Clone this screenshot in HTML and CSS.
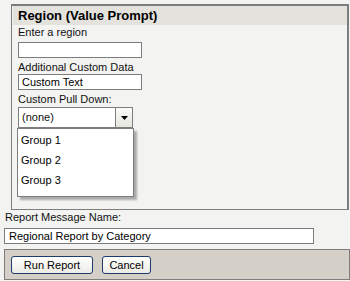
FILE: index.html
```html
<!DOCTYPE html>
<html lang="en">

<head>
    <meta charset="UTF-8">
    <meta name="viewport" content="width=device-width, initial-scale=1.0">
    <title>Region Prompt</title>
    <link rel="stylesheet" href="styles.css">
</head>

<body>
    <div class="prompt-panel">
        <div class="prompt-title">Region (Value Prompt)</div>

        <div class="prompt-body">
            <label class="field-label first">Enter a region</label>
            <input type="text" class="text-field region-field">

            <label class="field-label">Additional Custom Data</label>
            <input type="text" class="text-field custom-field" value="Custom Text">

            <label class="field-label">Custom Pull Down:</label>
            <div class="pulldown">
                <div class="pulldown-box">
                    <span class="pulldown-value">(none)</span>
                    <span class="pulldown-arrow">
                        <svg width="7" height="4" viewBox="0 0 7 4">
                            <polygon points="0,0 7,0 3.5,4" fill="#000" />
                        </svg>
                    </span>
                </div>
                <ul class="pulldown-list">
                    <li>Group 1</li>
                    <li>Group 2</li>
                    <li>Group 3</li>
                </ul>
            </div>
        </div>
    </div>

    <div class="message-row">
        <label class="message-label">Report Message Name:</label>
        <input type="text" class="text-field message-field" value="Regional Report by Category">
    </div>

    <div class="button-bar">
        <button class="bar-button run-button">Run Report</button>
        <button class="bar-button cancel-button">Cancel</button>
    </div>
</body>

</html>
```

FILE: styles.css
```css
* {
    margin: 0;
    padding: 0;
    box-sizing: border-box;
    font-family: 'Liberation Sans', Arial, sans-serif;
}

body {
    background: #f3f3f1;
    font-size: 11px;
    color: #111;
}

.prompt-panel {
    margin: 4px 1px 0 11px;
    border: 1px solid #7d7d7d;
    border-top-width: 2px;
    border-right-width: 2px;
    padding-left: 1px;
}

.prompt-title {
    background: #e3e2dd;
    height: 19px;
    line-height: 19px;
    padding-left: 5px;
    font-size: 13px;
    font-weight: bold;
    color: #000;
}

.prompt-body {
    padding: 0 0 81px 5px;
}

.field-label {
    display: block;
    line-height: 14px;
    margin-top: 2px;
}

.field-label.first {
    margin-top: 0;
}

.text-field {
    display: block;
    height: 16px;
    border: 1px solid #7d7d7d;
    background: white;
    font-size: 11px;
    padding: 0 3px;
    color: #000;
}

.region-field {
    width: 124px;
    margin-top: 3px;
}

.custom-field {
    width: 124px;
}

.pulldown {
    position: relative;
    margin-top: 1px;
    width: 115px;
}

.pulldown-box {
    display: flex;
    height: 21px;
    border: 1px solid #7d7d7d;
    background: white;
}

.pulldown-value {
    flex: 1;
    line-height: 19px;
    padding-left: 3px;
}

.pulldown-arrow {
    width: 17px;
    border-left: 1px solid #7d7d7d;
    background: linear-gradient(#fbfbf8, #e6e5df);
    display: flex;
    justify-content: center;
    align-items: center;
}

/* open list drawn over the panel */
.pulldown-list {
    position: absolute;
    top: 21px;
    left: -1px;
    width: 117px;
    height: 69px;
    list-style: none;
    background: white;
    border: 1px solid #7d7d7d;
    padding-top: 1px;
    box-shadow: 3px 3px 2px rgba(0, 0, 0, 0.3);
}

.pulldown-list li {
    line-height: 20px;
    padding-left: 3px;
    color: #000;
}

.message-label {
    display: block;
    line-height: 14px;
    margin-left: 5px;
}

.message-field {
    width: 310px;
    margin: 4px 0 0 4px;
    padding-left: 4px;
}

.button-bar {
    display: flex;
    gap: 9px;
    margin: 5px 0 0 4px;
    height: 31px;
    padding: 6px;
    background: #d4d0c8;
    border: 1px solid #7d7d7d;
}

.bar-button {
    height: 18px;
    border: 1px solid #1c3b6e;
    border-radius: 3px;
    background: linear-gradient(#ffffff, #ecebe5);
    font-size: 11px;
    color: #000;
}

.run-button {
    width: 82px;
}

.cancel-button {
    width: 49px;
}
```
